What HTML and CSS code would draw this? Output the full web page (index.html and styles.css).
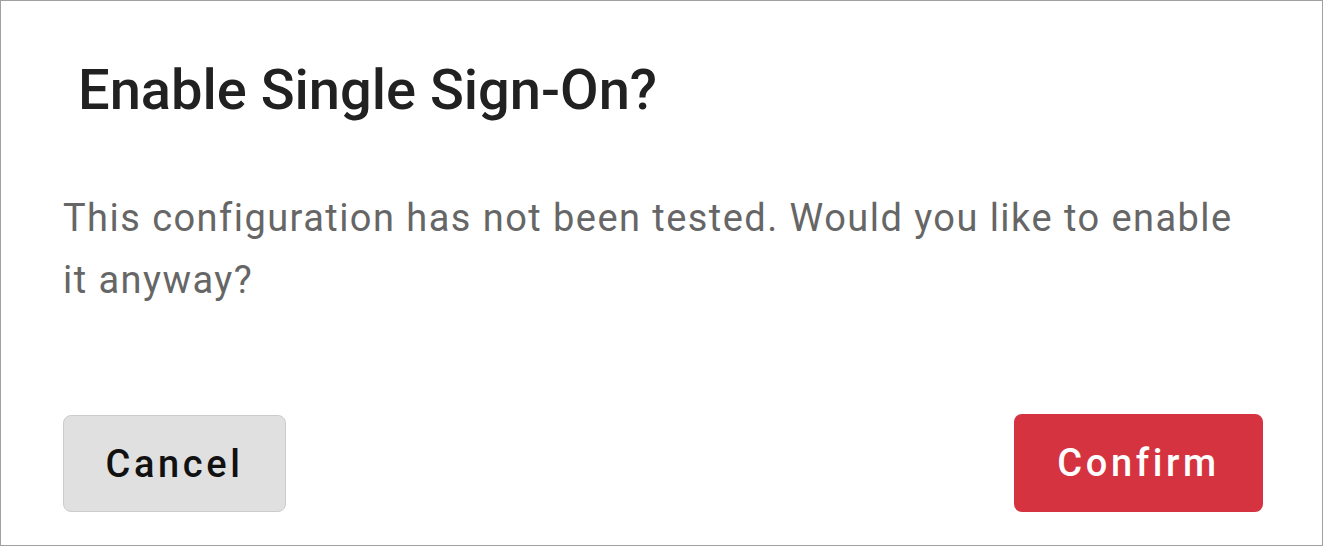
FILE: index.html
```html
<!DOCTYPE html>
<html lang="en">
<head>
    <meta charset="UTF-8">
    <title>Enable Single Sign-On?</title>
    <link rel="stylesheet" href="styles.css">
</head>
<body>
    <div class="dialog">
        <h2 class="dialog-title">Enable Single Sign-On?</h2>
        <p class="dialog-body">This configuration has not been tested. Would you like to enable it anyway?</p>
        <div class="dialog-actions">
            <button class="btn btn-cancel">Cancel</button>
            <button class="btn btn-confirm">Confirm</button>
        </div>
    </div>
</body>
</html>
```

FILE: styles.css
```css
html, body {
    margin: 0;
    padding: 0;
    background-color: white;
}

body {
    font-family: Roboto, "Liberation Sans", sans-serif;
}

.dialog {
    box-sizing: border-box;
    width: 1323px;
    height: 546px;
    border: 1px solid #a0a0a0;
    padding: 0 59px 33px 62px;
    display: flex;
    flex-direction: column;
}

.dialog-title {
    margin: 56px 0 0 15px;
    font-size: 56px;
    font-weight: 500;
    color: #212121;
    line-height: 67px;
}

.dialog-body {
    margin: 63px 0 0 0;
    font-size: 38px;
    line-height: 62px;
    letter-spacing: 1.45px;
    color: #666666;
}

.dialog-actions {
    margin-top: auto;
    display: flex;
    justify-content: space-between;
    align-items: flex-end;
}

.btn {
    font-family: Roboto, "Liberation Sans", sans-serif;
    font-size: 38px;
    font-weight: 500;
    letter-spacing: 3.6px;
    border-radius: 8px;
    cursor: pointer;
}

.btn-cancel {
    width: 223px;
    height: 97px;
    background-color: #e0e0e0;
    border: 1px solid #cccccc;
    color: #111111;
}

.btn-confirm {
    width: 249px;
    height: 98px;
    background-color: #d63341;
    border: none;
    color: white;
}
```
